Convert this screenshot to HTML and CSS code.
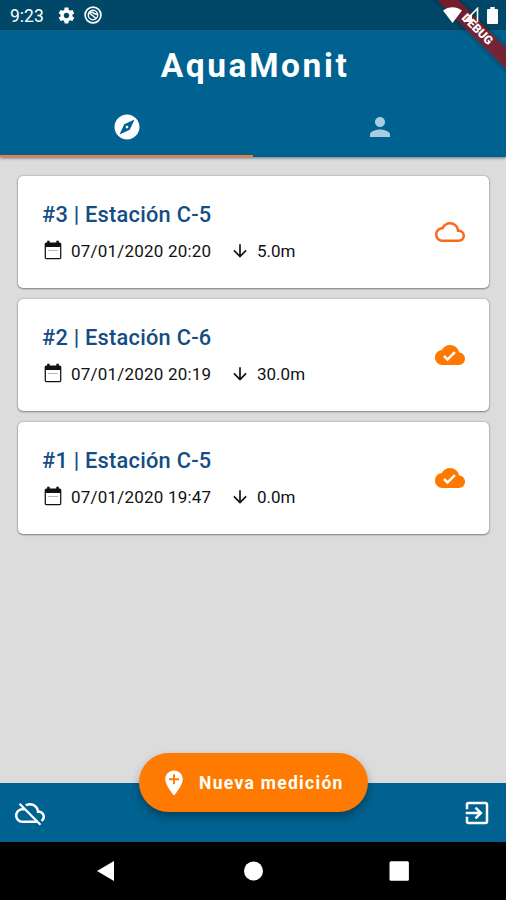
FILE: index.html
```
<!DOCTYPE html>
<html lang="es">
<head>
    <meta charset="UTF-8">
    <meta name="viewport" content="width=device-width, initial-scale=1.0">
    <title>AquaMonit</title>
    <link rel="stylesheet" href="styles.css">
</head>
<body>
    <!-- icons used more than once -->
    <svg class="sprite">
        <symbol id="calendar" viewBox="0 0 24 24"><path d="M20 3h-1V1h-3v2H8V1H5v2H4c-1.1 0-2 .9-2 2v16c0 1.1.9 2 2 2h16c1.1 0 2-.9 2-2V5c0-1.1-.9-2-2-2zm.5 18.500h-17V8.500h17z"/><path d="M6 12h12v1.200H6z" opacity=".3"/></symbol>
        <symbol id="arrow-down" viewBox="0 0 24 24"><path d="M20 12l-1.41-1.41L13 16.17V4h-2v12.17l-5.58-5.59L4 12l8 8 8-8z"/></symbol>
        <symbol id="cloud-done" viewBox="0 0 24 24"><path d="M19.35 10.04C18.67 6.59 15.64 4 12 4 9.11 4 6.6 5.64 5.35 8.04 2.34 8.36 0 10.91 0 14c0 3.31 2.69 6 6 6h13c2.76 0 5-2.24 5-5 0-2.64-2.05-4.78-4.65-4.96zM10 17l-3.5-3.5 1.41-1.41L10 14.17 15.18 9l1.41 1.41L10 17z"/></symbol>
    </svg>

    <div class="status-bar">
        <span class="clock">9:23</span>
        <svg class="gear-icon" viewBox="0 0 24 24"><path d="M19.43 12.98c.04-.32.07-.64.07-.98s-.03-.66-.07-.98l2.11-1.65c.19-.15.24-.42.12-.64l-2-3.46c-.12-.22-.39-.3-.61-.22l-2.49 1c-.52-.4-1.08-.73-1.69-.98l-.38-2.65C14.46 2.18 14.25 2 14 2h-4c-.25 0-.46.18-.49.42l-.38 2.65c-.61.25-1.17.59-1.69.98l-2.49-1c-.23-.09-.49 0-.61.22l-2 3.46c-.13.22-.07.49.12.64l2.11 1.65c-.04.32-.07.65-.07.98s.03.66.07.98l-2.11 1.65c-.19.15-.24.42-.12.64l2 3.46c.12.22.39.3.61.22l2.49-1c.52.4 1.08.73 1.69.98l.38 2.65c.03.24.24.42.49.42h4c.25 0 .46-.18.49-.42l.38-2.65c.61-.25 1.17-.59 1.69-.98l2.49 1c.23.09.49 0 .61-.22l2-3.46c.12-.22.07-.49-.12-.64l-2.11-1.65zM12 15.5c-1.93 0-3.5-1.57-3.5-3.5s1.57-3.5 3.5-3.5 3.5 1.57 3.5 3.5-1.57 3.5-3.5 3.5z"/></svg>
        <svg class="dnd-icon" viewBox="0 0 18 18">
            <circle cx="9" cy="9" r="7.9" fill="none" stroke="#fff" stroke-width="1.7"/>
            <circle cx="9" cy="9" r="4.7" fill="none" stroke="#fff" stroke-width="1.5"/>
            <path d="M5 6.5c2-.8 3.5-.6 4.5.5s2 1 3.5 1.200M5 6.500l7 6" fill="none" stroke="#fff" stroke-width="1.6"/>
        </svg>
        <div class="status-right">
            <svg class="wifi-icon" viewBox="0 0 19 16"><path d="M0 3.5C5.5-1 13.5-1 19 3.5L9.5 16z"/></svg>
            <svg class="signal-icon" viewBox="0 0 16 16"><path d="M1 15L14.5 1.5V15" fill="none" stroke="#fff" stroke-width="1.6"/><path d="M1 15L9 7v8z"/></svg>
            <svg class="battery-icon" viewBox="0 0 11 17"><path d="M3.3 0h4.4v2H10q1 0 1 1v13q0 1-1 1H1q-1 0-1-1V3q0-1 1-1h2.3z"/></svg>
        </div>
    </div>

    <div class="header">
        <h1 class="title">AquaMonit</h1>
        <div class="tabs">
            <div class="tab active">
                <svg class="icon" viewBox="0 0 24 24"><path d="M12 10.9c-.61 0-1.1.49-1.1 1.1s.49 1.1 1.1 1.1c.61 0 1.1-.49 1.1-1.1s-.49-1.1-1.1-1.1zM12 2C6.48 2 2 6.48 2 12s4.48 10 10 10 10-4.48 10-10S17.52 2 12 2zm2.19 12.19L6 18l3.81-8.19L18 6l-3.81 8.19z"/></svg>
            </div>
            <div class="tab">
                <svg class="icon" viewBox="0 0 24 24"><path d="M12 12c2.21 0 4-1.79 4-4s-1.79-4-4-4-4 1.79-4 4 1.79 4 4 4zm0 2c-2.67 0-8 1.34-8 4v2h16v-2c0-2.66-5.33-4-8-4z"/></svg>
            </div>
        </div>
    </div>

    <div class="list">
        <div class="card">
            <div class="card-text">
                <p class="station">#3 | Estación C-5</p>
                <div class="details">
                    <svg class="calendar-icon"><use href="#calendar"/></svg>
                    <span class="date">07/01/2020 20:20</span>
                    <svg class="arrow-icon"><use href="#arrow-down"/></svg>
                    <span class="depth">5.0m</span>
                </div>
            </div>
            <svg class="cloud-icon pending" viewBox="0 0 24 24"><path d="M19.35 10.04C18.67 6.59 15.64 4 12 4 9.11 4 6.6 5.64 5.35 8.04 2.34 8.36 0 10.91 0 14c0 3.31 2.69 6 6 6h13c2.76 0 5-2.24 5-5 0-2.64-2.05-4.78-4.65-4.96zM19 18H6c-2.21 0-4-1.79-4-4s1.79-4 4-4h.71C7.37 7.69 9.48 6 12 6c3.04 0 5.5 2.46 5.5 5.5v.5H19c1.66 0 3 1.34 3 3s-1.34 3-3 3z"/></svg>
        </div>

        <div class="card">
            <div class="card-text">
                <p class="station">#2 | Estación C-6</p>
                <div class="details">
                    <svg class="calendar-icon"><use href="#calendar"/></svg>
                    <span class="date">07/01/2020 20:19</span>
                    <svg class="arrow-icon"><use href="#arrow-down"/></svg>
                    <span class="depth">30.0m</span>
                </div>
            </div>
            <svg class="cloud-icon"><use href="#cloud-done"/></svg>
        </div>

        <div class="card">
            <div class="card-text">
                <p class="station">#1 | Estación C-5</p>
                <div class="details">
                    <svg class="calendar-icon"><use href="#calendar"/></svg>
                    <span class="date">07/01/2020 19:47</span>
                    <svg class="arrow-icon"><use href="#arrow-down"/></svg>
                    <span class="depth">0.0m</span>
                </div>
            </div>
            <svg class="cloud-icon"><use href="#cloud-done"/></svg>
        </div>
    </div>

    <div class="bottom-bar">
        <svg class="icon" viewBox="0 0 24 24"><path d="M19.35 10.04C18.67 6.59 15.64 4 12 4c-1.48 0-2.85.43-4.01 1.17l1.46 1.46C10.21 6.23 11.08 6 12 6c3.04 0 5.5 2.46 5.5 5.5v.5H19c1.66 0 3 1.34 3 3 0 1.13-.64 2.11-1.56 2.62l1.45 1.45C23.16 18.16 24 16.68 24 15c0-2.64-2.05-4.78-4.65-4.96zM3 5.27l2.75 2.74C2.56 8.15 0 10.77 0 14c0 3.31 2.69 6 6 6h11.73l2 2L21 20.73 4.27 4 3 5.27zM7.73 10l8 8H6c-2.21 0-4-1.79-4-4s1.79-4 4-4h1.73z"/></svg>
        <button class="new-button">
            <svg class="icon" viewBox="0 0 24 24"><path d="M12 2C8.14 2 5 5.14 5 9c0 5.25 7 13 7 13s7-7.75 7-13c0-3.86-3.14-7-7-7zm4 7.75h-3.25V13h-1.5V9.75H8v-1.5h3.25V5h1.5v3.25H16z"/></svg>
            <span>Nueva medición</span>
        </button>
        <svg class="icon" viewBox="0 0 24 24"><path d="M10.09 15.59L11.5 17l5-5-5-5-1.41 1.41L12.67 11H3v2h9.67l-2.58 2.59zM19 3H5c-1.11 0-2 .9-2 2v4h2V5h14v14H5v-4H3v4c0 1.1.89 2 2 2h14c1.1 0 2-.9 2-2V5c0-1.1-.9-2-2-2z"/></svg>
    </div>

    <div class="nav-bar">
        <svg class="nav-icon" viewBox="0 0 22 22"><path d="M19 1v20L2 11z"/></svg>
        <svg class="nav-icon" viewBox="0 0 22 22"><circle cx="11.5" cy="11" r="9.5"/></svg>
        <svg class="nav-icon" viewBox="0 0 22 22"><rect x="1.500" y="1.3" width="19.4" height="19.4" rx="1.5"/></svg>
    </div>

    <div class="debug-banner">DEBUG</div>
</body>
</html>
```
FILE: styles.css
```
* {
    box-sizing: border-box;
}
body {
    margin: 0;
    width: 506px;
    height: 900px;
    position: relative;
    overflow: hidden;
    display: flex;
    flex-direction: column;
    background-color: #dcdcdc;
    font-family: Roboto, sans-serif;
}
svg {
    display: block;
    flex-shrink: 0;
    fill: currentColor;
}
.sprite {
    position: absolute;
    width: 0;
    height: 0;
}
.icon {
    width: 30px;
    height: 30px;
}

/* top */
.status-bar {
    height: 30px;
    padding: 2px 8px 0 10px;
    display: flex;
    align-items: center;
    background-color: #004768;
    color: white;
}
.clock {
    width: 47px;
    font-size: 17.5px;
}
.gear-icon {
    width: 19px;
    height: 19px;
    margin-top: -2px;
}
.dnd-icon {
    width: 18px;
    height: 18px;
    margin: -2px 0 0 8px;
}
/* system icons stay above the ribbon */
.status-right {
    position: relative;
    z-index: 2;
    margin: -2px 0 0 auto;
    display: flex;
    align-items: center;
}
.wifi-icon {
    width: 19px;
    height: 16px;
}
.signal-icon {
    width: 16px;
    height: 16px;
    margin-left: 1px;
}
.battery-icon {
    width: 11px;
    height: 17px;
    margin: 1px 0 0 8px;
}
.header {
    height: 127px;
    display: flex;
    flex-direction: column;
    background-color: #006290;
    box-shadow: 0 1px 3px rgba(0, 0, 0, 0.5);
}
.title {
    margin: 0;
    height: 68px;
    padding-left: 4px;
    line-height: 71px;
    text-align: center;
    font-size: 33.5px;
    font-weight: bold;
    letter-spacing: 2.6px;
    color: white;
}
.tabs {
    flex: 1;
    display: flex;
}
.tab {
    flex: 1;
    padding-top: 14px;
    display: flex;
    justify-content: center;
    color: #a9cde0;
}
.tab.active {
    color: white;
    border-bottom: 2px solid #ee7d3c;
}

/* measurements */
.list {
    flex: 1;
    padding: 19px 17px 0 18px;
    display: flex;
    flex-direction: column;
    gap: 11px;
}
.card {
    height: 112px;
    padding: 0 24px 0 25px;
    display: flex;
    justify-content: space-between;
    align-items: center;
    background-color: white;
    border-radius: 5px;
    box-shadow: 0 1px 2px rgba(0, 0, 0, 0.35), 0 0 2px rgba(0, 0, 0, 0.35);
}
.station {
    margin: 1px 0 0 -1px;
    line-height: 26px;
    font-size: 21.8px;
    font-weight: 500;
    letter-spacing: 0.25px;
    color: #134d83;
}
.details {
    margin-top: 11px;
    display: flex;
    align-items: center;
    line-height: 24px;
    font-size: 17px;
    color: #111;
}
.calendar-icon {
    width: 20px;
    height: 20px;
    margin-top: -2px;
}
.date {
    width: 159px;
    margin-left: 8px;
    letter-spacing: 0.2px;
}
.arrow-icon {
    width: 20px;
    height: 20px;
    margin-top: -1px;
}
.depth {
    margin-left: 7px;
}
.cloud-icon {
    width: 30px;
    height: 30px;
    color: #ff7800;
}
.cloud-icon.pending {
    color: #fb6a1c;
}

/* bottom */
.bottom-bar {
    position: relative;
    height: 59px;
    padding: 0 14px 0 15px;
    display: flex;
    justify-content: space-between;
    align-items: center;
    background-color: #006290;
    color: white;
}
/* sits half over the list */
.new-button {
    position: absolute;
    top: -30px;
    left: 139px;
    width: 229px;
    height: 59px;
    padding: 0 0 0 20px;
    display: flex;
    align-items: center;
    gap: 10px;
    border: none;
    border-radius: 30px;
    background-color: #ff7a00;
    box-shadow: 0 5px 10px rgba(0, 0, 0, 0.3);
    color: white;
    font-family: inherit;
    font-size: 17.5px;
    font-weight: bold;
    letter-spacing: 1.3px;
    white-space: nowrap;
}
.nav-bar {
    height: 58px;
    padding: 0 96px 0 95px;
    display: flex;
    justify-content: space-between;
    align-items: center;
    background-color: black;
    color: white;
}
.nav-icon {
    width: 22px;
    height: 22px;
}

/* corner ribbon */
.debug-banner {
    position: absolute;
    z-index: 1;
    top: 22px;
    left: 417px;
    width: 120px;
    height: 15px;
    line-height: 15px;
    text-align: center;
    transform: rotate(45deg);
    background-color: rgba(160, 14, 20, 0.72);
    box-shadow: 0 0 6px rgba(0, 0, 0, 0.4);
    color: white;
    font-size: 12px;
    font-weight: 900;
}
```
